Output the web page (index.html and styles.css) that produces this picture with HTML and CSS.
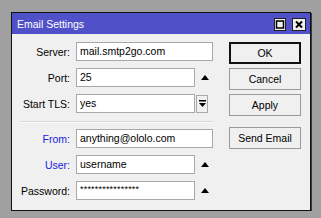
FILE: index.html
```html
<!DOCTYPE html>
<html>
<head>
<meta charset="utf-8">
<link rel="stylesheet" href="styles.css">
</head>
<body>
<div class="screen">
  <div class="dialog">
    <div class="titlebar">
      <span class="title">Email Settings</span>
      <div class="tbtns">
        <span class="tbtn max"><svg width="10" height="11" viewBox="0 0 10 11"><rect x="1.5" y="2" width="7" height="7" fill="none" stroke="#000" stroke-width="1.5"/></svg></span>
        <span class="tbtn close"><svg width="12" height="11" viewBox="0 0 12 11"><path d="M3 2.5 L9 8.5 M9 2.5 L3 8.5" stroke="#000" stroke-width="2"/></svg></span>
      </div>
    </div>
    <div class="body">
      <div class="form">
        <div class="row">
          <span class="label">Server:</span>
          <span class="field wide">mail.smtp2go.com</span>
        </div>
        <div class="row">
          <span class="label">Port:</span>
          <span class="field">25</span>
          <span class="arrow"><svg width="8" height="5" viewBox="0 0 8 5"><polygon points="0,5 8,5 4,0" fill="#000"/></svg></span>
        </div>
        <div class="row">
          <span class="label">Start TLS:</span>
          <span class="field">yes</span>
          <span class="drop"><svg width="7" height="8" viewBox="0 0 7 8"><rect x="0" y="0" width="7" height="1.5" fill="#000"/><polygon points="0,3 7,3 3.5,7" fill="#000"/></svg></span>
        </div>
        <div class="sep"></div>
        <div class="row">
          <span class="label blue">From:</span>
          <span class="field wide">anything@ololo.com</span>
        </div>
        <div class="row">
          <span class="label blue">User:</span>
          <span class="field">username</span>
          <span class="arrow"><svg width="8" height="5" viewBox="0 0 8 5"><polygon points="0,5 8,5 4,0" fill="#000"/></svg></span>
        </div>
        <div class="row">
          <span class="label">Password:</span>
          <span class="field pass">****************</span>
          <span class="arrow"><svg width="8" height="5" viewBox="0 0 8 5"><polygon points="0,5 8,5 4,0" fill="#000"/></svg></span>
        </div>
      </div>
      <div class="buttons">
        <span class="btn default">OK</span>
        <span class="btn">Cancel</span>
        <span class="btn">Apply</span>
        <span class="btn send">Send Email</span>
      </div>
    </div>
  </div>
</div>
</body>
</html>
```
FILE: styles.css
```css
html, body {
  margin: 0;
  background: #a0a0a0;
  font-family: "Liberation Sans", Arial, sans-serif;
  font-size: 10.5px;
  color: #000;
}
.screen {
  padding: 12px 0 0 11px;
}
.dialog {
  width: 300px;
  height: 199px;
  box-sizing: border-box;
  border: 1px solid #111;
  box-shadow: 1px 1px 0 #3a3a3a;
  background: #f0f0f0;
  display: flex;
  flex-direction: column;
}
.titlebar {
  height: 21px;
  flex: none;
  background: #5050c8;
  color: #fff;
  display: flex;
  align-items: center;
  justify-content: space-between;
  padding: 0 4px 0 5px;
}
.title {
  font-size: 10.5px;
  padding-top: 1px;
}
.tbtns {
  display: flex;
  gap: 6px;
  padding-top: 2px;
}
.tbtn {
  height: 13px;
  box-sizing: border-box;
  border: 1px solid #222;
  background: #f0f0f0;
  display: flex;
  align-items: center;
  justify-content: center;
}
.tbtn.max { width: 12px; }
.tbtn.close { width: 14px; }
.body {
  display: flex;
  padding: 8px 0 0 0;
}
.form {
  width: 201px;
  display: flex;
  flex-direction: column;
  gap: 7px;
}
.row {
  display: flex;
  align-items: center;
  height: 19px;
}
.label {
  width: 58px;
  text-align: right;
  margin-right: 6px;
  white-space: nowrap;
}
.label.blue {
  color: #2020e0;
}
.field {
  width: 119px;
  height: 19px;
  box-sizing: border-box;
  background: #fff;
  border: 1px solid #a8a8a8;
  padding-left: 3px;
  line-height: 17px;
  white-space: nowrap;
  overflow: hidden;
}
.field.wide {
  width: 137px;
}
.field.pass {
  font-size: 9px;
  letter-spacing: 0.2px;
  line-height: 14px;
}
.arrow {
  width: 18px;
  display: flex;
  justify-content: center;
  padding-left: 2px;
  box-sizing: border-box;
}
.drop {
  width: 12px;
  height: 18px;
  margin-left: 1px;
  box-sizing: border-box;
  border: 1px solid #a8a8a8;
  display: flex;
  align-items: center;
  justify-content: center;
}
.sep {
  margin: 1px 0 -1px 9px;
  height: 0;
  border-top: 1px solid #d6d6d6;
  border-bottom: 1px solid #fbfbfb;
}
.buttons {
  margin-left: 16px;
  display: flex;
  flex-direction: column;
  gap: 4px;
}
.btn {
  width: 72px;
  height: 22px;
  box-sizing: border-box;
  border: 1px solid #9a9a9a;
  background: #f0f0f0;
  display: flex;
  align-items: center;
  justify-content: center;
}
.btn.default {
  border: 2px solid #111;
}
.btn.send {
  margin-top: 7px;
}
```
